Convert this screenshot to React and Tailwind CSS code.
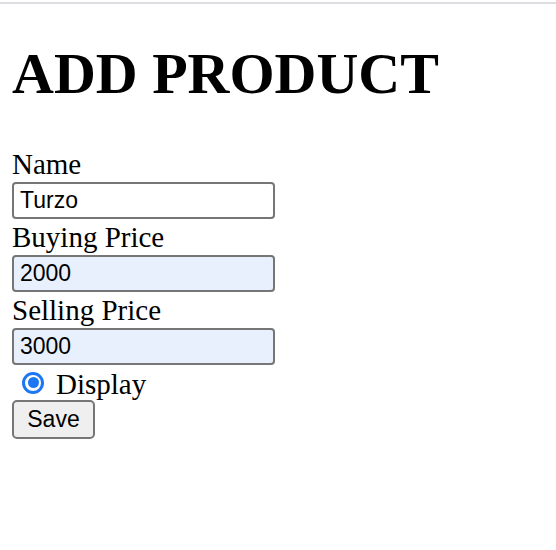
import React from 'react';

const serif = { fontFamily: '"Liberation Serif", "Times New Roman", serif' };
const sans = { fontFamily: '"Liberation Sans", Arial, sans-serif' };

const Field = ({ label, value, filled }) => (
  <>
    <div className="h-[36px] leading-[36px] text-[29px] text-black" style={serif}>{label}</div>
    <div
      className={`w-[263px] h-[37px] border-2 border-[#767676] rounded-[4px] pl-[6px] flex items-center text-[23px] text-black ${filled ? 'bg-[#e8f0fe]' : 'bg-white'}`}
      style={sans}
    >
      {value}
    </div>
  </>
);

export default function App() {
  return (
    <div className="w-[556px] h-[550px] bg-white overflow-hidden">
      <div className="mt-[2px] h-[2px] bg-[#dddde2]" />
      <div className="px-[12px]">
        <h1 className="mt-[36px] h-[67px] leading-[67px] text-[58px] font-bold text-black" style={serif}>
          ADD PRODUCT
        </h1>
        <div className="mt-[39px] flex flex-col items-start">
          <Field label="Name" value="Turzo" />
          <Field label="Buying Price" value="2000" filled />
          <Field label="Selling Price" value="3000" filled />
          <div className="h-[35px] flex items-center">
            <div className="ml-[10px] w-[22px] h-[22px] rounded-full border-[3px] border-[#1d77f2] flex items-center justify-center">
              <div className="w-[11px] h-[11px] rounded-full bg-[#1d77f2]" />
            </div>
            <span className="ml-[12px] text-[29px] leading-[36px] text-black mt-[2px]" style={serif}>Display</span>
          </div>
          <button
            className="w-[83px] h-[39px] bg-[#efefef] border-2 border-[#767676] rounded-[5px] text-[23px] text-black"
            style={sans}
          >
            Save
          </button>
        </div>
      </div>
    </div>
  );
}
